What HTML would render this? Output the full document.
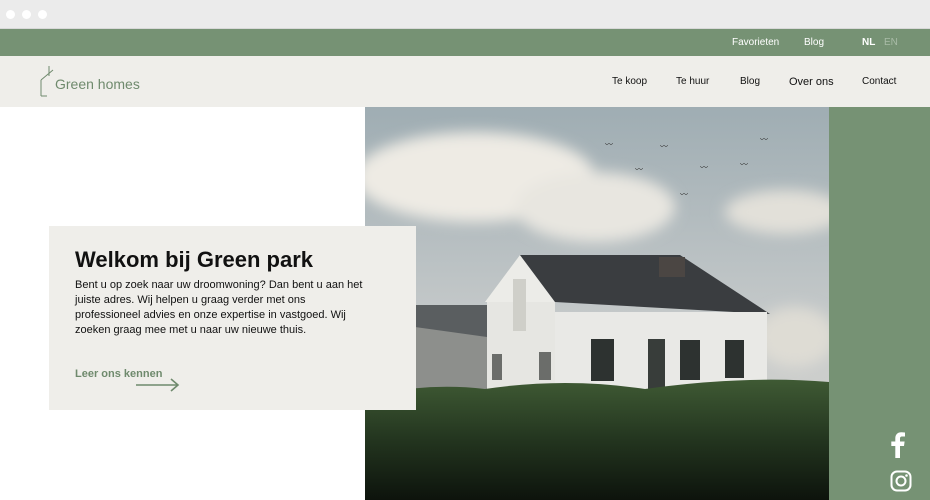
<!DOCTYPE html>
<html><head><meta charset="utf-8"><style>
*{margin:0;padding:0;box-sizing:border-box}
body{width:930px;height:500px;overflow:hidden;background:#fff;font-family:"Liberation Sans",sans-serif;position:relative}
.chrome{position:absolute;left:0;top:0;width:930px;height:29px;background:#ebebeb;border-bottom:1px solid #d8d8d8}
.dot{position:absolute;top:10px;width:9px;height:9px;border-radius:50%;background:#fff}
.top{position:absolute;left:0;top:29px;width:930px;height:27px;background:#769274;color:#fff;font-size:10px}
.top span{position:absolute;top:8px}
.hdr{position:absolute;left:0;top:56px;width:930px;height:51px;background:#efeeea}
.hdr .nav{position:absolute;top:20px;font-size:10px;color:#111}
.logo{position:absolute;left:55px;top:20px;font-size:14px;color:#6f8a6d}
.photo{position:absolute;left:365px;top:107px;width:464px;height:393px}
.side{position:absolute;left:829px;top:107px;width:101px;height:393px;background:#769274}
.card{position:absolute;left:49px;top:226px;width:367px;height:184px;background:#efeeea}
.card h1{position:absolute;left:26px;top:21px;font-size:22px;color:#111;font-weight:bold}
.card p{position:absolute;left:26px;top:52px;width:292px;font-size:11px;line-height:15px;color:#111}
.card .lnk{position:absolute;left:26px;top:142px;font-size:11px;font-weight:bold;color:#6f8a6d}
</style></head><body>
<div class="chrome"><div class="dot" style="left:6px"></div><div class="dot" style="left:22px"></div><div class="dot" style="left:38px"></div></div>
<div class="top"><span style="left:732px">Favorieten</span><span style="left:804px">Blog</span><span style="left:862px;font-weight:bold">NL</span><span style="left:884px;color:#a9bba7">EN</span></div>
<div class="hdr">
<svg style="position:absolute;left:38px;top:10px" width="20" height="32"><path d="M3 30V14M3 30H9M3 14L15 4M11 0v10" stroke="#6f8a6d" stroke-width="1" fill="none"/></svg>
<div class="logo">Green homes</div>
<span class="nav" style="left:612px">Te koop</span><span class="nav" style="left:676px">Te huur</span><span class="nav" style="left:740px">Blog</span><span class="nav" style="left:789px;font-size:11px">Over ons</span><span class="nav" style="left:862px">Contact</span>
</div>
<svg class="photo" viewBox="0 0 464 393">
<defs><linearGradient id="sky" x1="0" y1="0" x2="0" y2="1"><stop offset="0" stop-color="#9fadb3"/><stop offset="0.6" stop-color="#c9cccc"/><stop offset="1" stop-color="#d6d4cd"/></linearGradient>
<linearGradient id="gr" x1="0" y1="0" x2="0" y2="1"><stop offset="0" stop-color="#3f5a34"/><stop offset="0.5" stop-color="#23351f"/><stop offset="1" stop-color="#0d130c"/></linearGradient>
<filter id="b"><feGaussianBlur stdDeviation="7"/></filter></defs>
<rect width="464" height="393" fill="url(#sky)"/>
<g filter="url(#b)">
<ellipse cx="110" cy="70" rx="120" ry="45" fill="#eeebe4"/>
<ellipse cx="230" cy="100" rx="80" ry="35" fill="#e8e6e0"/>
<ellipse cx="420" cy="105" rx="60" ry="22" fill="#e2e0d9"/>
<ellipse cx="430" cy="230" rx="40" ry="30" fill="#dedcd4"/>
</g>
<rect x="50" y="198" width="75" height="85" fill="#8d8f8c"/>
<polygon points="50,198 122,198 122,230 50,220" fill="#5a5e60"/>
<polygon points="120,195 155,148 190,195" fill="#ecece8"/>
<polygon points="155,148 315,148 405,207 190,195" fill="#3a3d40"/>
<rect x="122" y="195" width="68" height="95" fill="#e6e6e2"/>
<rect x="190" y="205" width="212" height="85" fill="#e9e9e6"/>
<rect x="294" y="150" width="26" height="20" fill="#4b4643"/>
<rect x="148" y="172" width="13" height="52" fill="#cfcfc9"/>
<rect x="226" y="232" width="23" height="42" fill="#2d3230"/>
<rect x="283" y="232" width="17" height="50" fill="#383d3a"/>
<rect x="315" y="233" width="20" height="40" fill="#2d3230"/>
<rect x="360" y="233" width="19" height="38" fill="#2d3230"/>
<rect x="174" y="245" width="12" height="28" fill="#6b6d6a"/>
<rect x="127" y="247" width="10" height="26" fill="#6b6d6a"/>
<path d="M0 290 Q60 275 120 282 Q200 270 280 282 Q380 268 464 275 V393 H0Z" fill="url(#gr)"/>
<g fill="#333" font-size="8"><text x="240" y="40">〰</text><text x="295" y="42">〰</text><text x="395" y="35">〰</text><text x="375" y="60">〰</text><text x="270" y="65">〰</text><text x="315" y="90">〰</text><text x="335" y="63">〰</text></g>
</svg>
<div class="side">
<svg style="position:absolute;left:62px;top:325px" width="14" height="26" viewBox="0 0 14 26"><path d="M9 26V14h4l.6-4.5H9V6.7c0-1.3.4-2.2 2.2-2.2H14V.5A32 32 0 0 0 10.3.3C6.7.3 4.3 2.5 4.3 6.5v3H.3V14h4v12z" fill="#fff"/></svg>
<svg style="position:absolute;left:61px;top:363px" width="22" height="22" viewBox="0 0 22 22"><rect x="1.5" y="1.5" width="19" height="19" rx="5.5" fill="none" stroke="#fff" stroke-width="2"/><circle cx="11" cy="11" r="4.5" fill="none" stroke="#fff" stroke-width="2"/><circle cx="16.5" cy="5.5" r="1.3" fill="#fff"/></svg>
</div>
<div class="card">
<h1>Welkom bij Green park</h1>
<p>Bent u op zoek naar uw droomwoning? Dan bent u aan het juiste adres. Wij helpen u graag verder met ons professioneel advies en onze expertise in vastgoed. Wij zoeken graag mee met u naar uw nieuwe thuis.</p>
<div class="lnk">Leer ons kennen</div>
<svg style="position:absolute;left:86px;top:152px" width="46" height="14"><path d="M1 7H43M36 1L43 7L36 13" stroke="#6f8a6d" stroke-width="1.6" fill="none"/></svg>
</div>
</body></html>
